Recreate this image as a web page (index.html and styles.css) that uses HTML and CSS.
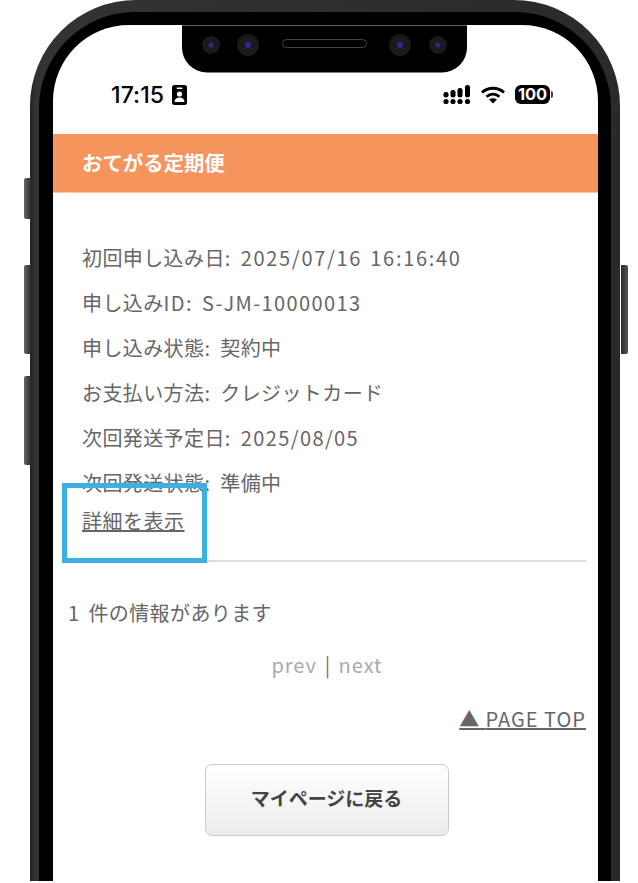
FILE: index.html
```html
<!DOCTYPE html>
<html lang="ja">
<head>
<meta charset="utf-8">
<title>おてがる定期便</title>
<link rel="stylesheet" href="styles.css">
</head>
<body>
<div class="phone">
  <span class="side-btn side-a"></span>
  <span class="side-btn side-b"></span>
  <span class="side-btn side-c"></span>
  <span class="side-btn side-r"></span>
  <div class="bezel">
    <div class="screen">
      <svg class="notch" width="285" height="48" viewBox="0 0 285 48">
        <path d="M0 0H285V22A25 25 0 0 1 260 47.500H25A25 25 0 0 1 0 22Z" fill="#000"/>
        <path d="M0 .5H285" stroke="#666" stroke-width="1"/>
        <circle cx="29" cy="20" r="9" fill="#1a1a1c"/><circle cx="29" cy="20" r="2.500" fill="#2b2b85"/>
        <circle cx="66" cy="20" r="11" fill="#1a1a1c"/><circle cx="66" cy="20" r="3" fill="#2b2b85"/>
        <rect x="100.500" y="14.500" width="84" height="8" rx="4" fill="none" stroke="#444"/>
        <circle cx="218" cy="20" r="11" fill="#1a1a1c"/><circle cx="218" cy="20" r="3" fill="#2b2b85"/>
        <circle cx="256" cy="20" r="9" fill="#1a1a1c"/><circle cx="256" cy="20" r="2.500" fill="#2b2b85"/>
      </svg>
      <div class="status">
        <div class="status-left">
          <span class="clock">17:15</span>
          <svg width="16" height="20" viewBox="0 0 16 20"><rect width="15" height="20" rx="2.500" fill="#000"/><rect x="4.500" y="2.500" width="6" height="1.600" rx=".8" fill="#fff"/><circle cx="7.500" cy="9" r="2.600" fill="#fff"/><path d="M2.500 17c0-3 2-4.500 5-4.500s5 1.500 5 4.500z" fill="#fff"/></svg>
        </div>
        <div class="status-right">
          <svg width="28" height="20" viewBox="0 0 28 20"><g fill="#000"><circle cx="3" cy="16.500" r="2.600"/><circle cx="10" cy="16.500" r="2.600"/><circle cx="17" cy="16.500" r="2.600"/><circle cx="24.500" cy="16.500" r="2.600"/><rect x=".5" y="7" width="5" height="5.500" rx="2.200"/><rect x="7.500" y="5" width="5" height="7.500" rx="2.200"/><rect x="14.500" y="3" width="5" height="9.500" rx="2.200"/><rect x="22" y="0" width="5" height="12.500" rx="2.200"/></g></svg>
          <svg class="wifi" width="24" height="18" viewBox="0 0 24 18"><g fill="none" stroke="#000" stroke-width="2.800"><path d="M1 6.500C7 .8 17 .8 23 6.500"/><path d="M5.500 10.800C9.500 7.300 14.500 7.300 18.500 10.800"/></g><path d="M8 13.500C10.500 11.700 13.500 11.700 16 13.500L12 17.500Z" fill="#000"/></svg>
          <span class="battery">100</span>
        </div>
      </div>
      <h1 class="title">おてがる定期便</h1>
      <main class="content">
        <div class="order">
          <p class="row">初回申し込み日: <span class="lat date">2025/07/16 16:16:40</span></p>
          <p class="row">申し込み<span class="lat">ID</span>: <span class="lat">S-JM-10000013</span></p>
          <p class="row">申し込み状態: 契約中</p>
          <p class="row">お支払い方法: クレジットカード</p>
          <p class="row">次回発送予定日: <span class="lat">2025/08/05</span></p>
          <p class="row">次回発送状態: 準備中</p>
          <a class="detail" href="#">詳細を表示</a>
          <span class="callout"></span>
        </div>
        <p class="count">1 件の情報があります</p>
        <p class="pager"><span class="lat">prev</span> <b>|</b> <span class="lat">next</span></p>
        <p class="top"><a href="#">▲ <span class="lat">PAGE TOP</span></a></p>
        <a class="back" href="#">マイページに戻る</a>
      </main>
    </div>
  </div>
</div>
</body>
</html>
```
FILE: styles.css
```css
* { box-sizing: border-box; }
html, body { margin: 0; padding: 0; background: #fff; }
body { width: 638px; height: 883px; overflow: hidden; font-family: "Noto Sans CJK JP", "Noto Sans", sans-serif; color: #666; }
p, h1 { margin: 0; }
a { color: inherit; }

.phone { position: relative; width: 590px; height: 881px; margin-left: 30px; padding: 12px 9px 0; border-radius: 106px 106px 0 0; background: linear-gradient(90deg, #222 0, #333 1%, #2a2a2a 100%); }
.side-btn { position: absolute; width: 7px; background: linear-gradient(90deg, #666, #2c2c2c); border-radius: 2px 0 0 2px; }
.side-a { left: -6px; top: 178px; height: 41px; }
.side-b { left: -6px; top: 265px; height: 89px; }
.side-c { left: -6px; top: 376px; height: 89px; }
.side-r { right: -8px; top: 265px; height: 89px; width: 7px; border-radius: 0 2px 2px 0; background: linear-gradient(90deg, #2c2c2c, #555); }

.bezel { height: 869px; padding: 13px 13px 0 14px; background: #000; border-radius: 96px 96px 0 0; }
.screen { position: relative; height: 856px; background: #fff; border-radius: 76px 76px 0 0; overflow: hidden; }
.notch { position: absolute; left: 129px; top: 0; }

.status { height: 109px; display: flex; justify-content: space-between; padding: 60px 48px 0 58px; }
.status-left { display: flex; gap: 8px; align-items: flex-start; }
.clock { font: 500 23px/20px Inter, sans-serif; color: #000; letter-spacing: .1px; }
.status-right { display: flex; align-items: flex-start; gap: 10px; }
.wifi { margin-top: 1px; }
.battery { position: relative; width: 35px; height: 19px; background: #000; border-radius: 6px; color: #fff; font: 700 16.500px/19px Inter, sans-serif; text-align: center; letter-spacing: -.1px; }
.battery::after { content: ""; position: absolute; right: -3px; top: 6px; width: 2px; height: 7px; background: #444; border-radius: 0 2px 2px 0; }

.title { height: 59px; padding: 0 29px; background: #f5945d; border-bottom: 1px solid #fbc9aa; color: #fff; font-size: 20.400px; font-weight: 700; line-height: 56px; }

.content { padding: 42px 12px 0 14px; font-size: 20px; letter-spacing: .4px; word-spacing: 5px; }
.lat { letter-spacing: 1.400px; word-spacing: 2px; }
.date { letter-spacing: 1.700px; }
.order { position: relative; padding: 0 0 24px 15px; border-bottom: 2px solid #ddd; }
.row { height: 45px; line-height: 45px; }
.detail { display: block; width: fit-content; line-height: 30px; margin-top: 1px; letter-spacing: .5px; }
.callout { position: absolute; left: -5px; top: 248px; width: 145px; height: 80px; border: 5.500px solid #3bb0e3; }
.count { margin-top: 34px; line-height: 34px; padding-left: 1px; word-spacing: 4px; }
.pager { margin-top: 18px; line-height: 34px; text-align: center; padding-left: 1px; color: #aaa; word-spacing: 3px; }
.pager .lat { letter-spacing: 1px; }
.pager b { font-weight: 400; color: #777; }
.top { margin-top: 20px; line-height: 34px; text-align: right; word-spacing: 1px; }
.top .lat { letter-spacing: 1px; word-spacing: 0; }
.back { display: block; width: 244px; height: 72px; margin: 28px auto 0; border: 1px solid #ccc; border-radius: 7px; background: linear-gradient(#fff, #ececec); color: #444; font-size: 19px; font-weight: 700; line-height: 65px; letter-spacing: 0; word-spacing: 0; text-align: center; text-decoration: none; }
```
